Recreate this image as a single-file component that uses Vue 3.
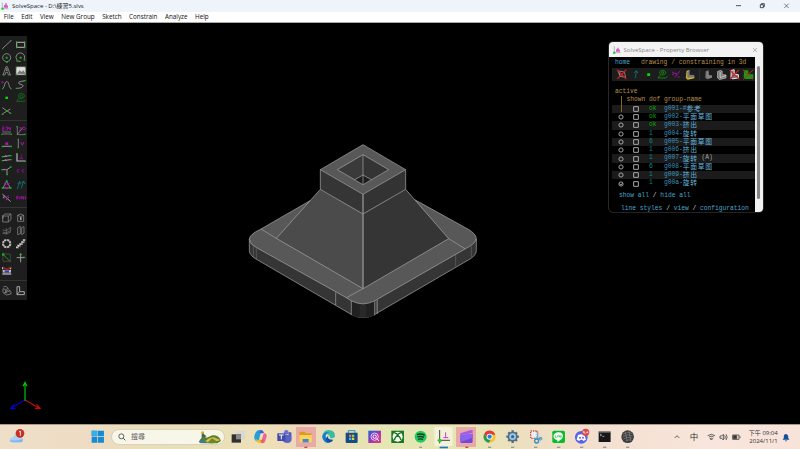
<script setup>
const menus = ['File', 'Edit', 'View', 'New Group', 'Sketch', 'Constrain', 'Analyze', 'Help']

const G = '#12b512'
const W = '#9a9a9a'
const M = '#b010b8'
const T = '#087c7c'
// Each icon is a list of [path, stroke, fill, width] on a 40 x 40 grid
const toolGroups = [
  [
    [['M8 31 33 8', W], ['M6 31h4v3h-4zM30 7h5v3h-5z', 'none', G]],
    [['M8 13h24v15h-24z', W, 'none', 3.5], ['M6 10h4v4h-4zM30 10h4v4h-4zM6 27h4v4h-4zM30 27h4v4h-4z', 'none', G]],
    [['M20 8a12 12 0 1 0 .1 0', W], ['M17 17h6v6h-6zM18 32h6v3h-6z', 'none', G]],
    [['M9 27a13 13 0 1 1 22-3M12 30l8 2', W], ['M17 17h6v6h-6zM7 28h5v4h-5zM29 25h5v4h-5z', 'none', G]],
    [['M9 33 18 8h4l9 25h-6l-2-8h-6l-2 8zM18 20h4l-2-7z', W, 'none', 2.2], ['M7 31h3v3h-3zM30 31h4v3h-4z', 'none', G]],
    [['M7 9h27v23h-27z', '#bdbdbd', '#dcdcdc', 2], ['M9 29l8-10 6 5 5-5 5 7v4z', 'none', '#777'], ['M5 8h4v3h-4zM32 8h4v3h-4zM5 30h4v4h-4zM32 30h4v4h-4z', 'none', G]],
    [['M8 32C16 26 12 12 20 11S25 27 33 32', W], ['M7 9v8M4 13h7', M, 'none', 2], ['M6 31h4v3h-4zM31 31h4v3h-4z', 'none', G]],
    [['M31 9C10 10 10 17 21 19S27 31 10 31', W, 'none', 3], ['M30 6h5v4h-5zM5 29h5v4h-5z', 'none', G]],
    [['M16 17h8v7h-8z', 'none', '#00d800']],
    [['M22 7a9 8 0 1 0 .1 0M22 12a4 4 0 1 0 .1 0M15 22 8 31h22l4-3', '#108a10', 'none', 2]],
    [['M7 11l25 17M7 30 31 15', W], ['M17 18h6v4h-6zM5 29h5v4h-5zM29 26h5v4h-5z', 'none', G]]
  ],
  [
    [['M6 9h6v5H7v5h6M17 9h5v9h-6M26 9v6h7M31 9v10', M], ['M7 24h26M7 30h26', W, 'none', 2], ['M4 29h4v4h-4zM32 29h4v4h-4z', 'none', G]],
    [['M10 7v25h20M10 31 27 11', W, 'none', 2], ['M16 11h6l-5 10M25 10h8M26 17h7l3-5', M], ['M7 6h4v4h-4zM29 29h6v4h-6z', 'none', G]],
    [['M8 28h24', W, 'none', 3], ['M16 16h9v8h-9z', 'none', M], ['M5 26h5v5h-5zM31 26h5v5h-5z', 'none', G]],
    [['M13 7v26', W, 'none', 2.5], ['M20 15l5 10 5-10', M, 'none', 3], ['M11 5h4v4h-4zM11 30h4v4h-4z', 'none', G]],
    [['M8 17l23-3M8 29l23-3', W, 'none', 3], ['M15 13l6 5M15 25l6 5', '#c090c0', 'none', 2], ['M5 15h5v4h-5zM30 12h5v4h-5zM5 27h5v4h-5zM30 24h5v4h-5z', 'none', G]],
    [['M9 7v23h25', '#b8b8b8', 'none', 3.5], ['M22 10v13M16 23h13', '#900898'], ['M7 6h4v4h-4zM31 29h5v4h-5z', 'none', G]],
    [['M6 17h15l10-7M21 18v13', W, 'none', 3], ['M14 14l6 5', M], ['M4 15h5v4h-5zM30 7h5v4h-5zM19 30h5v4h-5z', 'none', G]],
    [['M16 17h-6v7h6M31 17h-6v7h6', '#930d9a']],
    [['M20 10 9 30h22z', W], ['M13 16l6 5M22 21l6-5M20 27v7', M, 'none', 3.5], ['M17 7h6v4h-6zM5 28h5v4h-5zM30 28h5v4h-5z', 'none', G]],
    [['M10 33 17 11l-6 7M17 10l3 9M22 31l7-22-6 7M29 9l4 9', T, 'none', 2.5]],
    [['M7 9 32 32M13 14l-3 8M26 19l-8 8', W, 'none', 3], ['M12 22l15-8M17 28l10-9', M, 'none', 2.5]],
    [['M8 25v-9h4v9M18 25v-9M23 25v-9l6 9v-9M34 15v10', M, 'none', 2.5]]
  ],
  [
    [['M8 15h17v18H8zM8 15l6-6h19v17l-8 7M25 15l8-6', W, 'none', 2], ['M6 14h5v9h-5z', 'none', '#777']],
    [['M11 13l9-4 9 4v18H11zM11 13l9 4 9-4', W, 'none', 2], ['M18 18h5v9h-5z', 'none', '#999']],
    [['M8 18l12 2 12-10v10l-14 7-10-3M7 28l14 2 12-7M19 12v19', '#777', 'none', 2]],
    [['M11 11l8-4v22l-8 3zM23 11l7-3v20l-7 4z', '#858585', 'none', 2.3]],
    [['M20 9a11 11 0 1 0 .1 0', '#bcbcbc', 'none', 6], ['M20 4v8M20 28v8M4 20h8M28 20h8M9 9l5 5M26 26l5 5M9 31l5-5M26 14l5-5', '#1e1e1e', 'none', 2]],
    [['M6 31h6v-5h6v-5h6v-6h5V9h5', '#c8c8c8', 'none', 5], ['M10 28l4 4M16 23l4 4M22 17l4 4M27 11l4 4', '#222', 'none', 2]],
    [['M9 9h22v22H9z', '#555', 'none', 2], ['M9 10l22 22', G], ['M6 7h7v7h-7z', 'none', G]],
    [['M20 8v26M8 20h24', W, 'none', 3], ['M16 12l4-5 4 5M29 17l5 3', G]],
    [['M8 9v7M32 9v7', '#ddd', 'none', 3], ['M9 9l7 6h9l7-6', '#a22', 'none', 4], ['M8 18h25v8H8z', 'none', '#bbb'], ['M14 19h13v7h-13z', 'none', '#3040b0'], ['M7 30h27', '#eee', 'none', 3]]
  ],
  [
    [['M10 9l8-2 7 6-8 4-8-3v12l10 7 14-3v-7l-7-6-8 5v7M17 17v7M12 27l18-6', W, 'none', 2]],
    [['M9 8h8v15h14v9H9zM9 31l8-8', '#aaa', 'none', 3]]
  ]
]

const browserIcons = [
  { w: 14, p: [['M10 9l17 3 4 16-17-3zM8 9l8 17', '#aaa', 'none', 2], ['M5 5l28 28M33 5 6 33', '#d82020', 'none', 3.5]] },
  { w: 13, p: [['M19 31l4-22M16 14l7-6 4 7', T, 'none', 2.5]] },
  { w: 13, p: [['M16 16h9v8h-9z', 'none', '#00da00']] },
  { w: 14, p: [['M22 7a9 7 0 1 0 .1 0M22 11a3 3 0 1 0 .1 0M15 21 8 30h22l6-4', '#109510', 'none', 2.5]] },
  { w: 14, p: [['M8 12l7 4-7 5M15 17h9l8-7M24 18l-8 10M24 27h7', '#a011a8', 'none', 3]] },
  { w: 14, p: [['M10 9l9-3v14l14 1v8l-21 5-5-5z', 'none', '#777'], ['M10 9l9-3-7 7v17l21-3v4l-20 4-5-5z', 'none', '#d3b32a']] },
  { w: 18, p: [['M20 10l9-3v14l10 1v7l-14 5-6-5z', 'none', '#777'], ['M27 12v16M28 29l10-3', '#999', 'none', 2], ['M2 4v31', '#444', 'none', 1.5]] },
  { w: 13, p: [['M8 10l9-3 5 2v11l12 1v9l-20 5-6-5z', '#ccc', '#777', 2], ['M16 12v17l17-6', '#eee', 'none', 2]] },
  { w: 13, p: [['M10 7l9-2v14l13 1v10l-19 3-4-5z', '#eee', '#777', 3], ['M5 6l30 28M33 6 6 34', '#d82222', 'none', 3.5]] },
  { w: 14, p: [['M8 7h13v12h15v14H12l-5-5z', 'none', '#169b16'], ['M5 6l30 28M35 6 6 34', '#bd3015', 'none', 3]] }
]

const groups = [
  { dof: 'ok', id: 'g001-#', name: '参考' },
  { dof: 'ok', id: 'g002-', name: '平面草图' },
  { dof: 'ok', id: 'g003-', name: '挤出' },
  { dof: '1', id: 'g004-', name: '旋转' },
  { dof: '6', id: 'g005-', name: '平面草图' },
  { dof: '1', id: 'g006-', name: '挤出' },
  { dof: '1', id: 'g007-', name: '旋转', note: ' (A)' },
  { dof: '6', id: 'g008-', name: '平面草图' },
  { dof: '1', id: 'g009-', name: '挤出' },
  { dof: '1', id: 'g00a-', name: '旋转' }
]
</script>

<template>
  <div class="screen">
    <header class="titlebar">
      <svg class="logo" viewBox="0 0 24 24"><path d="M4 2v18h18" fill="none" stroke="#999" stroke-width="2" /><path d="M9 17V9h4V3h4v6l4 2v6z" fill="#d25bd0" /><path d="M1 17h7v6H1z" fill="#20d020" /></svg>
      <span class="title">SolveSpace - D:\練習5.slvs</span>
      <svg class="controls" viewBox="0 0 210 36" fill="none" stroke="#333" stroke-width="2.5"><path d="M18 17h15M91 14h9v9h-9zM94 14v-3h9v9h-3" /><path d="M163 11l13 13M176 11l-13 13" stroke="#666" /></svg>
    </header>
    <nav class="menubar">
      <span v-for="m in menus" :key="m">{{ m }}</span>
    </nav>

    <main class="canvas">
      <aside class="tools">
        <div v-for="(g, gi) in toolGroups" :key="gi" class="tool-group">
          <svg v-for="(icon, i) in g" :key="i" viewBox="0 0 40 40">
            <path v-for="(p, k) in icon" :key="k" :d="p[0]" :stroke="p[1]" :fill="p[2] || 'none'" :stroke-width="p[3] || 2.5" />
          </svg>
        </div>
      </aside>

      <svg class="model" viewBox="0 0 765 570" stroke-linejoin="round">
        <path d="M43 312V347Q43 362 68 375L350 539Q384 557 418 539L700 375Q724 362 724 347V312L384 490z" fill="#353535" stroke="#aaa" stroke-width="2" />
        <path d="M350 497L418 499V541Q384 556 350 541z" fill="#202020" />
        <path d="M374 505h19v42h-19z" fill="#292929" />
        <path d="M225 197L78 282Q43 298 43 313Q45 328 63 337L334 488L350 498Q384 515 418 498L690 342Q724 325 724 310Q722 296 700 283L541 195z" fill="#585858" stroke="#aaa" stroke-width="2" />
        <path d="M256 163L124 310 384 461V237z" fill="#4b4b4b" />
        <path d="M512 163L641 311 384 461V237z" fill="#353535" />
        <path d="M256 104v59l128 74V178z" fill="#353535" />
        <path d="M512 104v59l-128 74V178z" fill="#333" />
        <path d="M384 29L256 104l128 74 128-74z" fill="#585858" />
        <path d="M384 59L307 104l77 45 77-45z" fill="#3a3a3a" />
        <path d="M384 59v90l77-45z" fill="#343434" />
        <path d="M359 134l25-14 25 14-25 15z" fill="#1d1d1d" />
        <g fill="none" stroke="#aaa" stroke-width="2">
          <path d="M384 29L256 104l128 74 128-74zM384 59L307 104l77 45 77-45zM384 59v90M359 134l25-14 25 14M256 104v59l128 74 128-74v-59M256 163L124 310l260 151 257-150L512 163" />
          <path d="M78 282l46 28M641 311l49 30M384 461l-50 27M302 472v38M349 498v42M419 499v42M427 495v42" stroke-width="1.8" />
          <path d="M384 178v283" stroke="#929292" stroke-width="4" />
        </g>
        <path d="M55 334v32M64 340v33M662 359v35M709 334v32M424 497v38" stroke="#777" stroke-width="1.5" />
      </svg>

      <svg class="axes" viewBox="0 0 120 100" fill="none" stroke-width="3.5">
        <path d="M54 60L12 84M22 73L11 85l15 0" stroke="#0000d8" />
        <path d="M54 60L96 84M89 73l10 12-15 0" stroke="#c80808" />
        <path d="M54 62V8M48 19l6-12 6 12" stroke="#00c800" />
      </svg>

      <section class="browser">
        <div class="browser-title">
          <svg class="logo" viewBox="0 0 24 24"><path d="M4 1v19h19" fill="none" stroke="#999" stroke-width="2" /><path d="M9 17v-7h4V5h4v5l4 2v5z" fill="#d25bd0" /><path d="M0 17h7v6H0z" fill="#20d020" /></svg>
          <span>SolveSpace - Property Browser</span>
          <svg class="close" viewBox="0 0 18 18"><path d="M3 3l12 12M15 3 3 15" stroke="#999" stroke-width="2" /></svg>
        </div>
        <div class="browser-body">
          <div class="content">
            <div class="crumb"><span class="link">home</span><span>drawing / constraining in 3d</span></div>
            <div class="browser-tools">
              <svg v-for="(b, i) in browserIcons" :key="i" :viewBox="b.w === 18 ? '-6 0 54 40' : '0 0 40 40'" :style="{ width: b.w + 'px' }">
                <path v-for="(p, k) in b.p" :key="k" :d="p[0]" :stroke="p[1]" :fill="p[2] || 'none'" :stroke-width="p[3] || 2.5" />
              </svg>
            </div>
            <div class="active">active</div>
            <div class="list">
              <div class="heading"><span class="shown">shown</span><span>dof</span><span>group-name</span></div>
              <div v-for="(g, i) in groups" :key="g.id" class="row">
                <svg class="radio" viewBox="0 0 18 18"><circle v-if="i > 0" cx="9" cy="9" r="6.3" fill="none" stroke="#bbb" stroke-width="2.6" /><path v-if="i === 9" d="M5 8l4 4 5-6" fill="none" stroke="#aaa" stroke-width="2.5" /></svg>
                <svg class="check" viewBox="0 0 18 18"><path d="M2 2h14v14H2z" fill="none" stroke="#bbb" stroke-width="2.7" /></svg>
                <span :class="['dof', g.dof]">{{ g.dof }}</span>
                <span class="name"><span>{{ g.id }}</span><b>{{ g.name }}</b><i v-if="g.note">{{ g.note }}</i></span>
              </div>
            </div>
            <div class="links first">show all <em>/</em> hide all</div>
            <div class="links second">line styles <em>/</em> view <em>/</em> configuration</div>
          </div>
          <div class="scroll"><div class="thumb"></div></div>
        </div>
      </section>
    </main>

    <footer class="taskbar">
      <div class="weather">
        <svg viewBox="0 0 54 60"><path d="M12 49Q4 47 6 40t10-7q3-12 13-8 6 2 7 7 9 2 9 10 0 6-7 7z" fill="#acd0fa" /><path d="M12 49Q5 47 6 41q15 6 38-2 2 9-6 10z" fill="#82b4f4" /><circle cx="36" cy="22" r="13" fill="#c92e24" /><path d="M33 18l4-3v14" fill="none" stroke="#fff" stroke-width="2.5" /></svg>
      </div>
      <svg class="app" viewBox="0 0 69 75"><path d="M17 20h17v17H17zM36 20h18v17H36zM17 39h17v17H17zM36 39h18v17H36z" fill="#168bd4" /><path d="M17 20h17v17H17z" fill="#35afe7" /></svg>
      <div class="search-slot">
        <div class="search">
          <svg class="lens" viewBox="0 0 24 24"><circle cx="10" cy="10" r="7.5" fill="none" stroke="#444" stroke-width="2.5" /><path d="M16 16l6 6" stroke="#444" stroke-width="3" /></svg>
          <span>搜尋</span>
          <svg class="hill" viewBox="0 0 72 39"><path d="M3 32Q12 13 26 20L43 13Q64 12 69 30L58 37H9z" fill="#567d32" /><path d="M17 35Q34 18 48 19L67 27 45 37z" fill="#dbbd36" /><path d="M28 36l14-14 16 10-12 5z" fill="#648831" /><path d="M2 32q15-10 29 4H7z" fill="#47799a" /><path d="M11 4h7v6l8 6-15 6z" fill="#2d7149" /><circle cx="14" cy="5" r="4" fill="#e8a22c" /></svg>
        </div>
      </div>
      <svg class="app" viewBox="0 0 69 75"><path d="M30 20h28v26H30z" fill="#d8d8d4" /><path d="M17 31h28v25H17z" fill="#303032" /><path d="M30 31h15v15H30z" fill="#8a8a87" /></svg>
      <svg class="app" viewBox="0 0 69 75"><path d="M23 22q5-6 14-3l-7 29q-2 7-9 3-8-7-4-17 1-8 6-12z" fill="#239ed7" /><path d="M35 18q8 0 10 10h-14z" fill="#425bd5" /><path d="M45 28q9 0 8 10l-5 15q-3 7-12 4l6-22z" fill="#ed629b" /><path d="M18 43q8 9 18 2l-2 12q-8 2-11-6z" fill="#e6c032" /><path d="M34 49l11-4q-1 12-9 12z" fill="#e86b35" /></svg>
      <svg class="app" viewBox="0 0 69 75"><circle cx="43" cy="25" r="7" fill="#6672d6" /><circle cx="54" cy="29" r="5" fill="#4e5bb4" /><path d="M30 33h29v12q0 12-13 12T30 46z" fill="#5963c6" /><path d="M16 28h24v23H16z" fill="#414ba9" /><path d="M21 33h14M28 33v13" stroke="#fff" stroke-width="3" /></svg>
      <svg class="app active-app" viewBox="0 0 69 75"><path d="M16 23h16l4 5h17v26H16z" fill="#d99d22" /><path d="M16 33h38v22H16z" fill="#ffd157" /><path d="M26 45h18v10H26z" fill="#398bd2" /><path d="M31 68h9v4h-9z" fill="#b64b51" /></svg>
      <svg class="app" viewBox="0 0 69 75"><path d="M16 38Q18 17 36 18q17 1 18 16 1 10-14 9-3-15-13-12-12 4-9 15z" fill="#36bda6" /><path d="M16 37q6-17 22-11-12 0-12 11 1 14 19 13-10 12-22 3-8-6-7-16z" fill="#1678ce" /><path d="M34 35q-5 12 15 12-5 10-16 7-13-8 1-19z" fill="#0753a3" /></svg>
      <svg class="app" viewBox="0 0 69 75"><path d="M25 28v-8h20v8" fill="none" stroke="#258bd0" stroke-width="3" /><path d="M17 26h36v28q0 3-4 3H21q-4 0-4-3z" fill="#174c80" /><path d="M27 32h7v7h-7z" fill="#f36b3d" /><path d="M36 32h7v7h-7z" fill="#9cc749" /><path d="M27 41h7v7h-7z" fill="#47b7e2" /><path d="M36 41h7v7h-7z" fill="#f3ca40" /></svg>
      <svg class="app" viewBox="0 0 69 75"><defs><linearGradient id="purple" x2="1" y2="1"><stop stop-color="#1865dc" /><stop offset=".5" stop-color="#9c36b5" /><stop offset="1" stop-color="#e83c77" /></linearGradient></defs><path d="M16 20h38v37H16z" fill="url(#purple)" /><circle cx="35" cy="38" r="11" fill="none" stroke="#ecc7ff" stroke-width="3" /><circle cx="35" cy="38" r="5" fill="none" stroke="#fff" stroke-width="3" /><path d="M41 43l7 8" stroke="#fff" stroke-width="3" /></svg>
      <svg class="app" viewBox="0 0 69 75"><path d="M16 20h38v37H16z" fill="#16791b" /><circle cx="35" cy="38" r="15" fill="#fff" /><path d="M25 48Q28 39 35 33q7 6 10 15M26 27q6 1 9 5 3-4 9-5" fill="none" stroke="#16791b" stroke-width="4.5" /></svg>
      <svg class="app" viewBox="0 0 69 75"><circle cx="35" cy="38" r="18" fill="#20cc5c" /><path d="M24 32q12-5 23 2M25 39q11-4 20 2M27 46q8-3 15 1" fill="none" stroke="#183a23" stroke-width="4" /><path d="M31 68h8v4h-8z" fill="#999" /></svg>
      <svg class="app" viewBox="0 0 69 75"><rect x="7" y="9" width="55" height="58" rx="5" fill="#f3f1d9" /><path d="M23 18v40M17 49h37" stroke="#444" stroke-width="3" /><path d="M41 25v16M34 41h15" stroke="#c23dc1" stroke-width="3" /><path d="M19 45h9v9h-9z" fill="#28cf25" /><path d="M23 68h25v5H23z" fill="#197cc2" /></svg>
      <svg class="app active-app" viewBox="0 0 69 75"><path d="M16 28l29-9 8-1v9l-37 7z" fill="#a55be9" /><path d="M16 34l37-5v24q0 4-5 4H20q-4 0-4-4z" fill="#7845da" /><path d="M16 34l37-5v12L17 54z" fill="#8c63eb" /><path d="M31 68h9v4h-9z" fill="#b64b51" /></svg>
      <svg class="app" viewBox="0 0 69 75"><circle cx="35" cy="38" r="18" fill="#f4c42c" /><path d="M19 29A18 18 0 0 1 52 32H35L27 42z" fill="#dc4036" /><path d="M19 29A18 18 0 0 0 33 56l7-13-13-1z" fill="#299a50" /><circle cx="35" cy="38" r="9" fill="#fff" /><circle cx="35" cy="38" r="6.5" fill="#327bdc" /><path d="M30 68h10v4H30z" fill="#999" /></svg>
      <svg class="app" viewBox="0 0 69 75"><circle cx="35" cy="38" r="15" fill="#536d85" /><path d="M35 19v38M16 38h38M22 25l26 26M48 25L22 51" stroke="#536d85" stroke-width="7" /><circle cx="35" cy="38" r="10" fill="#a8c7dd" /><circle cx="35" cy="38" r="5" fill="#226db1" /><path d="M30 68h10v4H30z" fill="#999" /></svg>
      <svg class="app" viewBox="0 0 69 75"><path d="M20 21h20v22H20z" fill="#eee" stroke="#cb4b3b" stroke-width="4" stroke-dasharray="4 3" /><path d="M41 22v22M31 43h21" stroke="#77aac4" stroke-width="4" /><circle cx="38" cy="51" r="6" fill="none" stroke="#328fc5" stroke-width="4" /><circle cx="50" cy="44" r="4" fill="none" stroke="#328fc5" stroke-width="3" /><path d="M30 68h10v4H30z" fill="#999" /></svg>
      <svg class="app" viewBox="0 0 69 75"><rect x="16" y="20" width="38" height="37" rx="5" fill="#06be28" /><path d="M35 25c-20 0-20 22-4 23v6q16-8 17-17 0-12-13-12z" fill="#fff" /><path d="M25 34v6h4M32 34v6M36 40v-6l4 6v-6M44 35v5" fill="none" stroke="#06be28" stroke-width="2" /><path d="M30 68h10v4H30z" fill="#999" /></svg>
      <svg class="app" viewBox="0 0 69 75"><circle cx="34" cy="40" r="19" fill="#5662e8" /><path d="M24 33q10-4 20 0l4 14-8 4-3-4h-6l-3 4-8-4z" fill="#fff" /><circle cx="30" cy="41" r="3" fill="#5662e8" /><circle cx="39" cy="41" r="3" fill="#5662e8" /><circle cx="47" cy="25" r="11" fill="#d94450" /><path d="M44 22h-4v4h5v4M49 25h6M52 22v6" fill="none" stroke="#fff" stroke-width="2" /><path d="M30 68h10v4H30z" fill="#999" /></svg>
      <svg class="app" viewBox="0 0 69 75"><path d="M17 23h36v31H17z" fill="#171717" /><path d="M17 22h36v4H17z" fill="#777" /><path d="M21 30l5 3-5 3M28 37h6" fill="none" stroke="#ddd" stroke-width="2" /><path d="M30 68h10v4H30z" fill="#999" /></svg>
      <svg class="app" viewBox="0 0 69 75"><circle cx="35" cy="38" r="19" fill="#3c3c3c" /><path d="M21 31q14-10 27-3M20 38q14-10 30-2M22 45q12-10 27-2M29 51q9-6 17-2M27 22l7 30M39 21l5 29" fill="none" stroke="#858585" stroke-width="2" /><path d="M30 68h10v4H30z" fill="#999" /></svg>

      <div class="tray">
        <svg class="chevron" viewBox="0 0 24 24"><path d="M5 15l7-7 7 7" fill="none" stroke="#444" stroke-width="2.5" /></svg>
        <span class="ime">中</span>
        <svg class="status" viewBox="0 0 108 30" fill="none" stroke="#444" stroke-width="2.5"><path d="M5 11q11-8 22 0M9 15q7-5 14 0M12 20q4-3 8 0l-4 4z" /><path d="M42 12h5l5-5v17l-5-5h-5zM56 10q4 5 0 11M60 7q7 8 0 17" /><path d="M80 9h19v13H80zM102 13v5" /><path d="M82 11h10v9H82z" fill="#333" /></svg>
        <div class="clock"><span>下午 09:04</span><span>2024/11/1</span></div>
        <svg class="bell" viewBox="0 0 27 30"><path d="M2 23l4-6v-6Q7 3 13 3t8 8v6l4 6zM9 25h9q-4 6-9 0" fill="#164f9c" /></svg>
      </div>
    </footer>
  </div>
</template>

<style>
body { overflow: hidden; background: #000; }
</style>

<style scoped>
* { box-sizing: border-box; }
svg { display: block; flex: none; }
.screen { width: 800px; height: 449px; display: flex; flex-direction: column; background: #000; font-family: "Open Sans", "Noto Sans CJK TC", sans-serif; }
.titlebar { height: 12px; flex: none; display: flex; align-items: center; background: #eff4fb; padding-left: 1px; }
.titlebar .logo { width: 8px; height: 8px; }
.title { margin-left: 3px; font-size: 6px; line-height: 12px; color: #222; white-space: nowrap; }
.controls { width: 70px; height: 12px; margin-left: auto; }
.menubar { height: 11px; flex: none; display: flex; gap: 7.5px; padding-left: 3.8px; background: #fff; border-bottom: 1px solid #aaa; font-size: 6.3px; line-height: 10px; color: #111; white-space: nowrap; }
.canvas { position: relative; height: 401px; flex: none; background: #000; }
.tools { position: absolute; left: 0; top: 13px; width: 27px; height: 264px; padding: 1.7px 0 0 .4px; background: #1e1e1e; }
.tool-group { display: grid; grid-template-columns: repeat(2, 13.3px); grid-auto-rows: 13.35px; }
.tool-group + .tool-group { border-top: 1px solid #343434; margin-top: 2.7px; padding-top: 2.7px; }
.tool-group svg { width: 13.3px; height: 13.3px; }
.model { position: absolute; left: 235px; top: 112px; width: 255px; height: 190px; }
.axes { position: absolute; left: 6.5px; top: 357px; width: 40px; height: 33.3px; }
.browser { position: absolute; left: 609px; top: 19px; width: 154px; height: 169.5px; overflow: hidden; border-radius: 4px; background: #000; box-shadow: 0 0 0 .6px #444; }
.browser-title { height: 15px; display: flex; align-items: center; padding: 0 5.5px 0 4px; background: #f3f3f3; color: #888; font-size: 6px; white-space: nowrap; }
.browser-title .logo { width: 8px; height: 8px; margin-right: 2.5px; }
.close { width: 6px; height: 6px; margin-left: auto; }
.browser-body { display: flex; height: 154.5px; }
.content { width: 146px; flex: none; padding-left: 3px; font-family: "Liberation Mono", "Noto Sans CJK SC", monospace; font-size: 6.27px; line-height: 8.33px; color: #b8924a; white-space: pre; overflow: hidden; }
.crumb { display: flex; gap: 11px; height: 10.5px; padding: 2.3px 0 0 3px; }
.link { color: #4aa6ce; }
.browser-tools { height: 13.5px; display: flex; align-items: center; background: #1d1d1d; padding-left: 3px; }
.browser-tools svg { height: 13.3px; }
.active { height: 15.2px; padding: 7.2px 0 0 3px; }
.list { position: relative; }
.list::before { content: ""; position: absolute; left: 9px; top: 0; width: 1px; height: 16px; background: #85672c; }
.heading { display: grid; grid-template-columns: 22.6px 15px 1fr; padding-left: 14.5px; height: 8.33px; }
.row { display: grid; grid-template-columns: 15px 16px 12px 1fr; align-items: center; padding-left: 6px; height: 8.33px; }
.row:nth-child(even) { background: #1b1b1b; }
.radio, .check { width: 6px; height: 6px; }
.dof { color: #078b86; }
.dof.ok { color: #10a510; }
.name { display: flex; align-items: center; height: 8.33px; color: #3f92b9; padding-left: 3px; }
.name b { font-family: "Noto Sans CJK SC", sans-serif; font-size: 6.8px; letter-spacing: .7px; font-weight: 400; line-height: 7px; padding-bottom: 1.3px; color: #62b5df; }
.name i { font-style: normal; color: #aaa; }
.links { color: #4aa6ce; padding-left: 7px; }
.links em { font-style: normal; color: #ccc; }
.first { margin-top: 4.4px; }
.second { margin-top: 4.8px; padding-left: 9px; }
.scroll { width: 8px; background: #f2f2f2; padding: 9px 0 0 2px; }
.thumb { width: 3px; height: 133px; border-radius: 2px; background: #858585; }
.taskbar { height: 25px; flex: none; display: flex; align-items: center; background: linear-gradient(90deg, #efdfc8 0, #eedcc4 85px, #e7dfb8 170px, #eee0b8 265px, #edd8ba 300px, #e6e5b5 380px, #e7e5b4 465px, #ecdfbe 515px, #f2dfce 590px, #f8e5db 700px, #f7e3d9 100%); border-top: 1px solid #aa9b89; }
.weather { width: 85.5px; padding-left: 8px; }
.weather svg { width: 18px; height: 20px; margin-top: -2px; }
.app { width: 22.95px; height: 25px; margin-top: -1px; }
.active-app { background: linear-gradient(#e9aaa7, #e9aaa7) center 55% / 20px 20px no-repeat; }
.search-slot { width: 117.2px; padding: 0 0 0 3px; }
.search { width: 114px; height: 16px; display: flex; align-items: center; padding: 0 2.5px 0 5.5px; border-radius: 8px; background: #f8f6e9; border: .5px solid #d7d2b8; }
.search span { font-size: 7px; line-height: 14px; color: #666; margin-left: 5px; }
.lens { width: 8px; height: 8px; }
.hill { width: 24px; height: 13px; margin-left: auto; }
.tray { display: flex; align-items: center; margin-left: auto; padding-right: 10.3px; color: #333; }
.chevron { width: 8px; height: 8px; }
.ime { width: 9px; margin-left: 8.5px; font-size: 8.5px; line-height: 14px; }
.status { width: 36px; height: 10px; margin-left: 7px; }
.clock { width: 33px; margin-left: 3px; display: flex; flex-direction: column; text-align: right; font-size: 6px; line-height: 8.2px; white-space: nowrap; }
.bell { width: 8px; height: 9px; margin-left: 4px; }
</style>
